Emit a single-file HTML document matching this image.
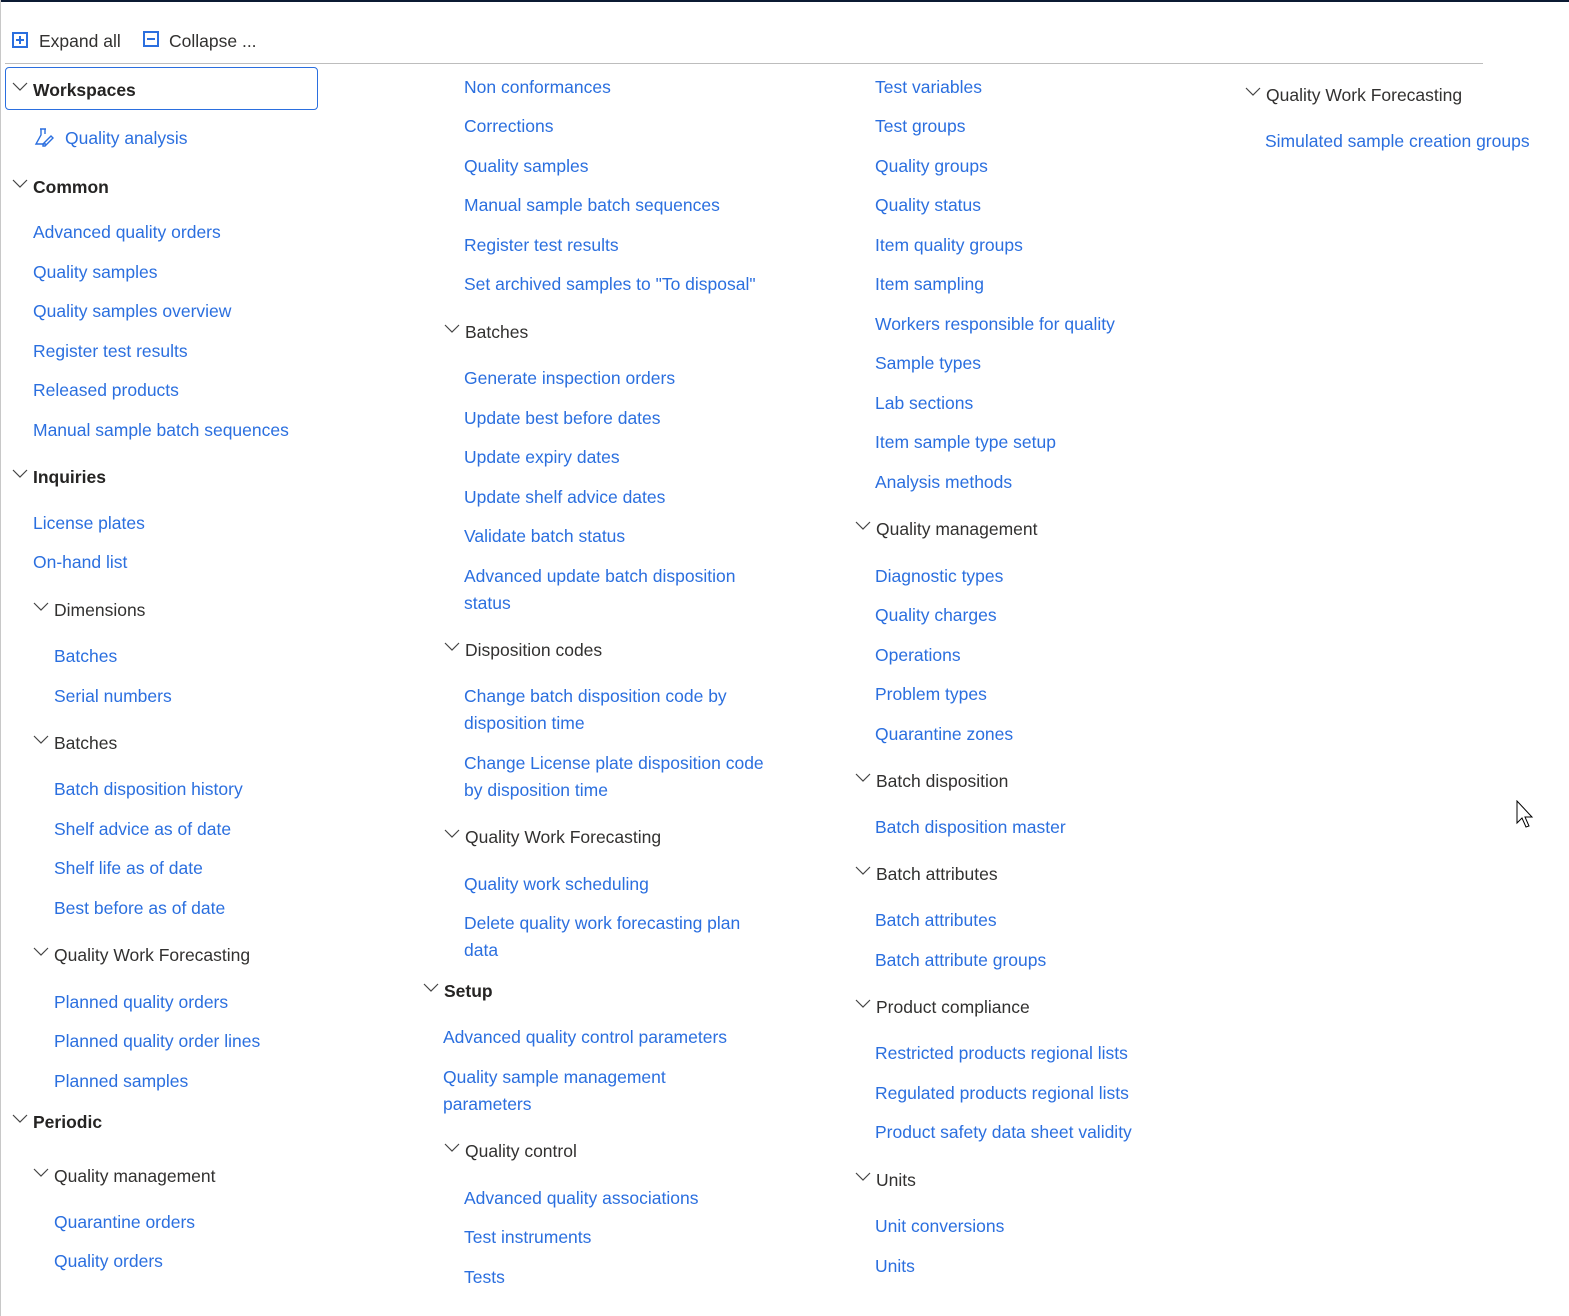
<!DOCTYPE html>
<html><head><meta charset="utf-8"><style>
html,body{margin:0;padding:0;background:#fff;}
body{width:1569px;height:1316px;position:relative;overflow:hidden;font-family:"Liberation Sans","Segoe UI",sans-serif;font-size:17.5px;}
.t{position:absolute;white-space:nowrap;line-height:22px;height:22px;margin-top:1px;}
.l{color:#2b6fdf;}
.h{color:#323130;}
.b{font-weight:bold;color:#252423;}
.c{position:absolute;width:16px;height:10px;}
</style></head><body>
<div style="position:absolute;left:0;top:0;width:1569px;height:2px;background:#0b1a33"></div>
<div style="position:absolute;left:0;top:0;width:1px;height:1316px;background:#c8c8c8"></div>
<div style="position:absolute;left:5px;top:63px;width:1478px;height:1px;background:#bdbdbd"></div>

<svg style="position:absolute;left:12px;top:32px" width="16" height="16" viewBox="0 0 16 16"><rect x="1" y="1" width="14" height="14" fill="none" stroke="#2b6fdf" stroke-width="2"/><path d="M8 4v8M4 8h8" stroke="#2b6fdf" stroke-width="2"/></svg>
<div class="t h" style="left:39px;top:29px">Expand all</div>
<svg style="position:absolute;left:143px;top:31px" width="16" height="16" viewBox="0 0 16 16"><rect x="1" y="1" width="14" height="14" fill="none" stroke="#2b6fdf" stroke-width="2"/><path d="M4 8h8" stroke="#2b6fdf" stroke-width="2"/></svg>
<div class="t h" style="left:169px;top:29px">Collapse ...</div>

<div style="position:absolute;left:5px;top:67px;width:311px;height:41px;border:1px solid #2b6fdf;border-radius:4px"></div>

<svg width="0" height="0" style="position:absolute"><defs><symbol id="ch" viewBox="0 0 16 10"><path d="M1 1l7 7 7-7" fill="none" stroke="#444" stroke-width="1.2"/></symbol></defs></svg>

<!-- col1 -->
<svg class="c" style="left:12px;top:82px"><use href="#ch"/></svg><div class="t b" style="left:33px;top:78px">Workspaces</div>
<svg style="position:absolute;left:34px;top:127px" width="20" height="20" viewBox="0 0 20 20"><path d="M6 2h6M7 2v6L2 17h10M11 2v5" fill="none" stroke="#2b6fdf" stroke-width="1.4"/><path d="M9 17l8-8 2 2-8 8H9z" fill="none" stroke="#2b6fdf" stroke-width="1.4"/></svg>
<div class="t l" style="left:65px;top:126px">Quality analysis</div>
<svg class="c" style="left:12px;top:179px"><use href="#ch"/></svg><div class="t b" style="left:33px;top:175px">Common</div>
<div class="t l" style="left:33px;top:220px">Advanced quality orders</div>
<div class="t l" style="left:33px;top:260px">Quality samples</div>
<div class="t l" style="left:33px;top:299px">Quality samples overview</div>
<div class="t l" style="left:33px;top:339px">Register test results</div>
<div class="t l" style="left:33px;top:378px">Released products</div>
<div class="t l" style="left:33px;top:418px">Manual sample batch sequences</div>
<svg class="c" style="left:12px;top:469px"><use href="#ch"/></svg><div class="t b" style="left:33px;top:465px">Inquiries</div>
<div class="t l" style="left:33px;top:511px">License plates</div>
<div class="t l" style="left:33px;top:550px">On-hand list</div>
<svg class="c" style="left:33px;top:602px"><use href="#ch"/></svg><div class="t h" style="left:54px;top:598px">Dimensions</div>
<div class="t l" style="left:54px;top:644px">Batches</div>
<div class="t l" style="left:54px;top:684px">Serial numbers</div>
<svg class="c" style="left:33px;top:735px"><use href="#ch"/></svg><div class="t h" style="left:54px;top:731px">Batches</div>
<div class="t l" style="left:54px;top:777px">Batch disposition history</div>
<div class="t l" style="left:54px;top:817px">Shelf advice as of date</div>
<div class="t l" style="left:54px;top:856px">Shelf life as of date</div>
<div class="t l" style="left:54px;top:896px">Best before as of date</div>
<svg class="c" style="left:33px;top:947px"><use href="#ch"/></svg><div class="t h" style="left:54px;top:943px">Quality Work Forecasting</div>
<div class="t l" style="left:54px;top:990px">Planned quality orders</div>
<div class="t l" style="left:54px;top:1029px">Planned quality order lines</div>
<div class="t l" style="left:54px;top:1069px">Planned samples</div>
<svg class="c" style="left:12px;top:1114px"><use href="#ch"/></svg><div class="t b" style="left:33px;top:1110px">Periodic</div>
<svg class="c" style="left:33px;top:1168px"><use href="#ch"/></svg><div class="t h" style="left:54px;top:1164px">Quality management</div>
<div class="t l" style="left:54px;top:1210px">Quarantine orders</div>
<div class="t l" style="left:54px;top:1249px">Quality orders</div>

<!-- col2 -->
<div class="t l" style="left:464px;top:75px">Non conformances</div>
<div class="t l" style="left:464px;top:114px">Corrections</div>
<div class="t l" style="left:464px;top:154px">Quality samples</div>
<div class="t l" style="left:464px;top:193px">Manual sample batch sequences</div>
<div class="t l" style="left:464px;top:233px">Register test results</div>
<div class="t l" style="left:464px;top:272px">Set archived samples to "To disposal"</div>
<svg class="c" style="left:444px;top:324px"><use href="#ch"/></svg><div class="t h" style="left:465px;top:320px">Batches</div>
<div class="t l" style="left:464px;top:366px">Generate inspection orders</div>
<div class="t l" style="left:464px;top:406px">Update best before dates</div>
<div class="t l" style="left:464px;top:445px">Update expiry dates</div>
<div class="t l" style="left:464px;top:485px">Update shelf advice dates</div>
<div class="t l" style="left:464px;top:524px">Validate batch status</div>
<div class="t l" style="left:464px;top:564px">Advanced update batch disposition</div>
<div class="t l" style="left:464px;top:591px">status</div>
<svg class="c" style="left:444px;top:642px"><use href="#ch"/></svg><div class="t h" style="left:465px;top:638px">Disposition codes</div>
<div class="t l" style="left:464px;top:684px">Change batch disposition code by</div>
<div class="t l" style="left:464px;top:711px">disposition time</div>
<div class="t l" style="left:464px;top:751px">Change License plate disposition code</div>
<div class="t l" style="left:464px;top:778px">by disposition time</div>
<svg class="c" style="left:444px;top:829px"><use href="#ch"/></svg><div class="t h" style="left:465px;top:825px">Quality Work Forecasting</div>
<div class="t l" style="left:464px;top:872px">Quality work scheduling</div>
<div class="t l" style="left:464px;top:911px">Delete quality work forecasting plan</div>
<div class="t l" style="left:464px;top:938px">data</div>
<svg class="c" style="left:423px;top:983px"><use href="#ch"/></svg><div class="t b" style="left:444px;top:979px">Setup</div>
<div class="t l" style="left:443px;top:1025px">Advanced quality control parameters</div>
<div class="t l" style="left:443px;top:1065px">Quality sample management</div>
<div class="t l" style="left:443px;top:1092px">parameters</div>
<svg class="c" style="left:444px;top:1143px"><use href="#ch"/></svg><div class="t h" style="left:465px;top:1139px">Quality control</div>
<div class="t l" style="left:464px;top:1186px">Advanced quality associations</div>
<div class="t l" style="left:464px;top:1225px">Test instruments</div>
<div class="t l" style="left:464px;top:1265px">Tests</div>

<!-- col3 -->
<div class="t l" style="left:875px;top:75px">Test variables</div>
<div class="t l" style="left:875px;top:114px">Test groups</div>
<div class="t l" style="left:875px;top:154px">Quality groups</div>
<div class="t l" style="left:875px;top:193px">Quality status</div>
<div class="t l" style="left:875px;top:233px">Item quality groups</div>
<div class="t l" style="left:875px;top:272px">Item sampling</div>
<div class="t l" style="left:875px;top:312px">Workers responsible for quality</div>
<div class="t l" style="left:875px;top:351px">Sample types</div>
<div class="t l" style="left:875px;top:391px">Lab sections</div>
<div class="t l" style="left:875px;top:430px">Item sample type setup</div>
<div class="t l" style="left:875px;top:470px">Analysis methods</div>
<svg class="c" style="left:855px;top:521px"><use href="#ch"/></svg><div class="t h" style="left:876px;top:517px">Quality management</div>
<div class="t l" style="left:875px;top:564px">Diagnostic types</div>
<div class="t l" style="left:875px;top:603px">Quality charges</div>
<div class="t l" style="left:875px;top:643px">Operations</div>
<div class="t l" style="left:875px;top:682px">Problem types</div>
<div class="t l" style="left:875px;top:722px">Quarantine zones</div>
<svg class="c" style="left:855px;top:773px"><use href="#ch"/></svg><div class="t h" style="left:876px;top:769px">Batch disposition</div>
<div class="t l" style="left:875px;top:815px">Batch disposition master</div>
<svg class="c" style="left:855px;top:866px"><use href="#ch"/></svg><div class="t h" style="left:876px;top:862px">Batch attributes</div>
<div class="t l" style="left:875px;top:908px">Batch attributes</div>
<div class="t l" style="left:875px;top:948px">Batch attribute groups</div>
<svg class="c" style="left:855px;top:999px"><use href="#ch"/></svg><div class="t h" style="left:876px;top:995px">Product compliance</div>
<div class="t l" style="left:875px;top:1041px">Restricted products regional lists</div>
<div class="t l" style="left:875px;top:1081px">Regulated products regional lists</div>
<div class="t l" style="left:875px;top:1120px">Product safety data sheet validity</div>
<svg class="c" style="left:855px;top:1172px"><use href="#ch"/></svg><div class="t h" style="left:876px;top:1168px">Units</div>
<div class="t l" style="left:875px;top:1214px">Unit conversions</div>
<div class="t l" style="left:875px;top:1254px">Units</div>

<!-- col4 -->
<svg class="c" style="left:1245px;top:87px"><use href="#ch"/></svg><div class="t h" style="left:1266px;top:83px">Quality Work Forecasting</div>
<div class="t l" style="left:1265px;top:129px">Simulated sample creation groups</div>

<svg style="position:absolute;left:1516px;top:800px" width="20" height="30" viewBox="0 0 20 30"><path d="M1 1v22l5-5 4 9 3-1-4-9h7z" fill="#fff" stroke="#000" stroke-width="1"/></svg>
</body></html>
